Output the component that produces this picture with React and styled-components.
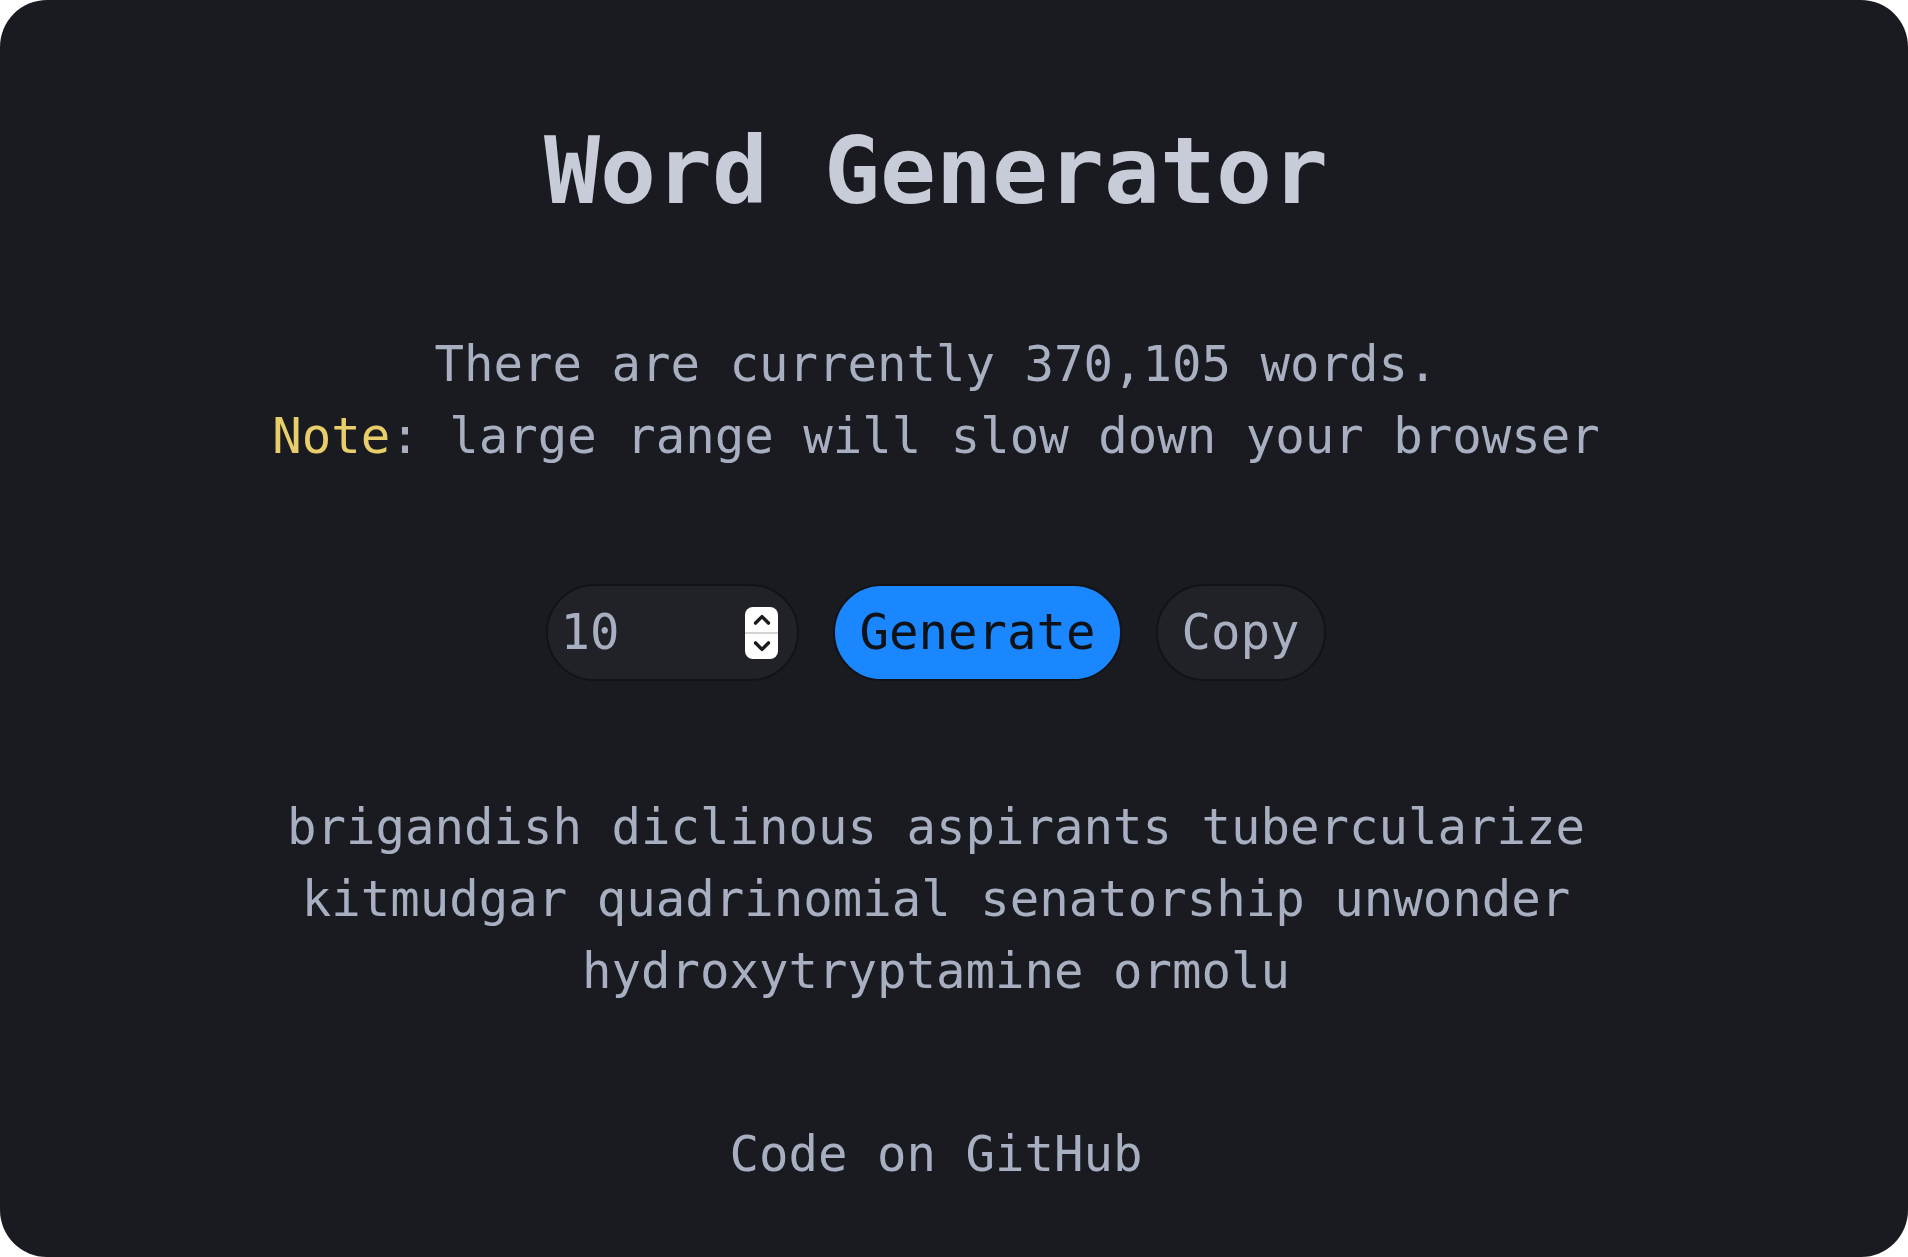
import styled, { createGlobalStyle } from "styled-components";

const WORDS = [
  "brigandish",
  "diclinous",
  "aspirants",
  "tubercularize",
  "kitmudgar",
  "quadrinomial",
  "senatorship",
  "unwonder",
  "hydroxytryptamine",
  "ormolu",
];

const MONO = `"DejaVu Sans Mono", "Liberation Mono", monospace`;

const GlobalStyle = createGlobalStyle`
  html, body {
    margin: 0;
    padding: 0;
    background: #ffffff;
  }
  * {
    box-sizing: border-box;
  }
`;

export default function App() {
  return (
    <>
      <GlobalStyle />
      <Card>
        <Title>Word Generator</Title>
        <Info>
          There are currently 370,105 words.
          <br />
          <Note>Note</Note>: large range will slow down your browser
        </Info>
        <Controls>
          <NumberPill>
            <NumberInput type="text" defaultValue="10" />
            <Spinner>
              <SpinHalf>
                <Chevron viewBox="0 0 14 9">
                  <path d="M2.5 7 L7 2.5 L11.5 7" />
                </Chevron>
              </SpinHalf>
              <SpinHalf $bottom>
                <Chevron viewBox="0 0 14 9">
                  <path d="M2.5 2 L7 6.5 L11.5 2" />
                </Chevron>
              </SpinHalf>
            </Spinner>
          </NumberPill>
          <PillButton $primary>Generate</PillButton>
          <PillButton>Copy</PillButton>
        </Controls>
        <WordList>{WORDS.join(" ")}</WordList>
        <Footer href="#">Code on GitHub</Footer>
      </Card>
    </>
  );
}

const Card = styled.div`
  display: flex;
  flex-direction: column;
  align-items: center;
  gap: 111px;
  width: 1908px;
  height: 1257px;
  padding: 125px 36px 0 0;
  background: #1a1b20;
  border-radius: 47px;
  font-family: ${MONO};
  color: #a8afc1;
  overflow: hidden;
`;

const Title = styled.h1`
  margin: 0;
  font-size: 93px;
  line-height: 93px;
  font-weight: 700;
  color: #c8ccd8;
`;

const Info = styled.p`
  margin: 0;
  font-size: 49px;
  line-height: 72px;
  text-align: center;
`;

const Note = styled.span`
  color: #e8cd6b;
`;

const Controls = styled.div`
  display: flex;
  align-items: center;
  gap: 34px;
`;

const NumberPill = styled.div`
  display: flex;
  align-items: center;
  width: 253px;
  height: 97px;
  padding: 0 19px 0 12px;
  background: #202228;
  border: 2px solid #121317;
  border-radius: 49px;
`;

const NumberInput = styled.input`
  flex: 1;
  min-width: 0;
  border: none;
  outline: none;
  background: transparent;
  font-family: ${MONO};
  font-size: 49px;
  color: #a8afc1;
  padding: 0;
`;

const Spinner = styled.div`
  display: flex;
  flex-direction: column;
  width: 33px;
  height: 52px;
  background: #ffffff;
  border-radius: 8px;
  overflow: hidden;
`;

const SpinHalf = styled.div`
  flex: 1;
  display: flex;
  align-items: center;
  justify-content: center;
  border-top: ${(p) => (p.$bottom ? "2px solid #d4d4d6" : "none")};
`;

const Chevron = styled.svg`
  width: 20px;
  height: 13px;
  fill: none;
  stroke: #1c1c1e;
  stroke-width: 2.4;
  stroke-linecap: round;
  stroke-linejoin: round;
`;

const PillButton = styled.button`
  height: 97px;
  padding: 0 24px;
  border: 2px solid #121317;
  border-radius: 49px;
  background: ${(p) => (p.$primary ? "#1a87ff" : "#202228")};
  color: ${(p) => (p.$primary ? "#0f1216" : "#a8afc1")};
  font-family: ${MONO};
  font-size: 49px;
  line-height: 1;
  cursor: pointer;
`;

const WordList = styled.p`
  margin: 0;
  max-width: 1420px;
  font-size: 49px;
  line-height: 72px;
  text-align: center;
`;

const Footer = styled.a`
  font-size: 49px;
  line-height: 72px;
  color: #a8afc1;
  text-decoration: none;
`;
